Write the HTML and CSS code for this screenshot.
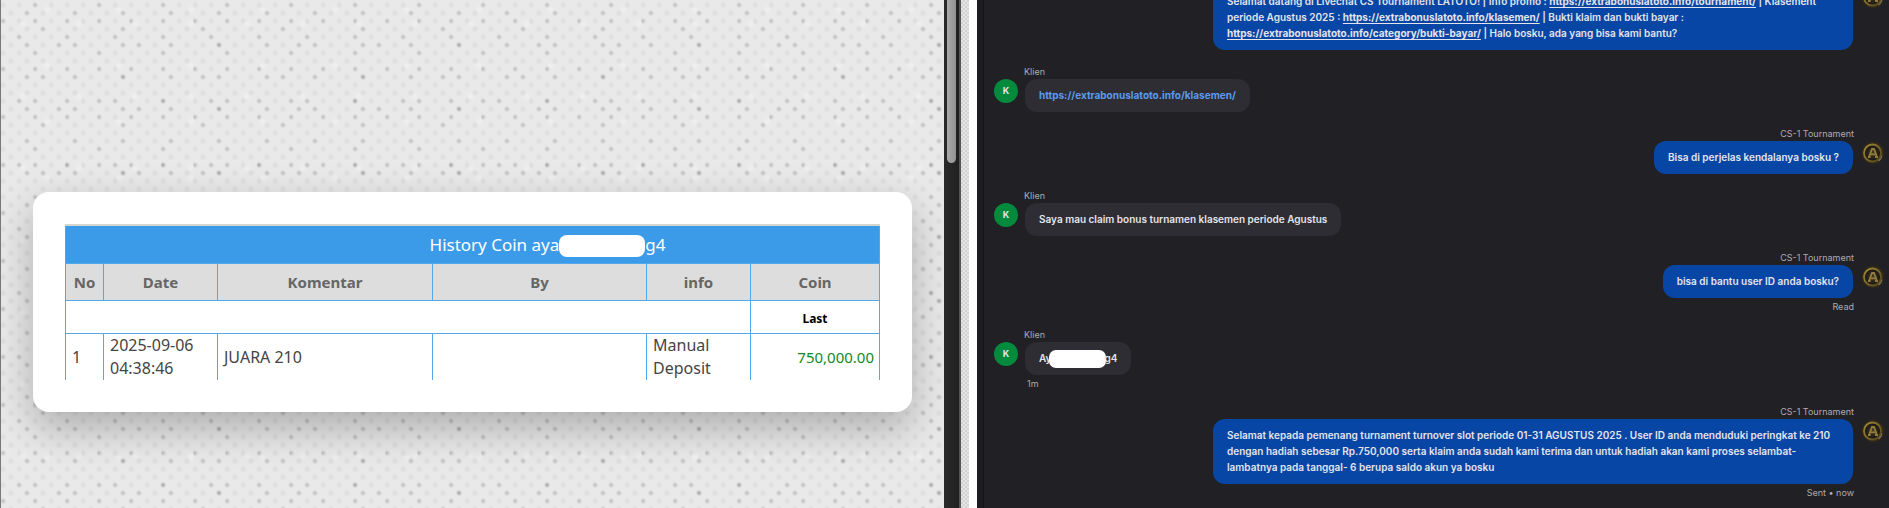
FILE: index.html
```
<!DOCTYPE html>
<html lang="id">
<head>
<meta charset="utf-8">
<title>History Coin</title>
<link rel="stylesheet" href="styles.css">
</head>
<body>
<svg class="defs" aria-hidden="true">
  <defs>
    <radialGradient id="gold-core"><stop offset="0" stop-color="#4a3d1a"/><stop offset="0.6" stop-color="#27231b"/><stop offset="1" stop-color="#15140f"/></radialGradient>
    <radialGradient id="gold-halo"><stop offset="0.7" stop-color="#3d3416"/><stop offset="1" stop-color="#211f20"/></radialGradient>
    <linearGradient id="gold-ring" x1="0" y1="0" x2="1" y2="1"><stop offset="0" stop-color="#a18a35"/><stop offset="0.5" stop-color="#7c6a2b"/><stop offset="1" stop-color="#4d3f16"/></linearGradient>
  </defs>
  <symbol id="agent-logo" viewBox="0 0 24 24">
    <circle cx="12" cy="12" r="12" fill="url(#gold-halo)"/>
    <circle cx="11.5" cy="12" r="8.5" fill="url(#gold-core)" stroke="url(#gold-ring)" stroke-width="1.8"/>
    <path d="M8 16 11 8h2l3 8M9.7 13.4h4.8M7 16h2.6M14 16h3" fill="none" stroke="#927d3e" stroke-width="1.8"/>
    <path d="M17.5 20c1.8-1.3 3-3.2 3.4-5.5" fill="none" stroke="#7d7459" stroke-width="1.2"/>
  </symbol>
</svg>
<main class="page">
  <section class="history">
    <div class="canvas">
      <div class="card">
        <table class="coins">
          <colgroup><col class="c-no"><col class="c-date"><col class="c-note"><col class="c-by"><col class="c-info"><col class="c-coin"></colgroup>
          <thead>
            <tr class="title"><th colspan="6">History Coin aya<span class="mask mask-title"></span>g4</th></tr>
            <tr class="heads"><th>No</th><th>Date</th><th>Komentar</th><th>By</th><th>info</th><th>Coin</th></tr>
          </thead>
          <tbody>
            <tr class="sub"><td colspan="5"></td><th>Last</th></tr>
            <tr class="entry"><td>1</td><td>2025-09-06 04:38:46</td><td>JUARA 210</td><td></td><td>Manual Deposit</td><td class="amount">750,000.00</td></tr>
          </tbody>
        </table>
      </div>
    </div>
    <div class="scrollbar"><div class="thumb"></div></div>
    <div class="edge"></div>
  </section>
  <section class="chat">
    <article class="msg agent">
      <div class="name">CS-1 Tournament</div>
      <div class="row"><p class="bubble">Selamat datang di Livechat CS Tournament LATOTO! | Info promo : <a href="#tournament">https://extrabonuslatoto.info/tournament/</a> | Klasement periode Agustus 2025 : <a href="#klasemen">https://extrabonuslatoto.info/klasemen/</a> | Bukti klaim dan bukti bayar : <a href="#bukti">https://extrabonuslatoto.info/category/bukti-bayar/</a> | Halo bosku, ada yang bisa kami bantu?</p><svg class="logo"><use href="#agent-logo"/></svg></div>
    </article>
    <article class="msg client">
      <div class="name">Klien</div>
      <div class="row"><span class="avatar">K</span><p class="bubble"><a href="#klasemen">https://extrabonuslatoto.info/klasemen/</a></p></div>
    </article>
    <article class="msg agent">
      <div class="name">CS-1 Tournament</div>
      <div class="row"><p class="bubble">Bisa di perjelas kendalanya bosku ?</p><svg class="logo"><use href="#agent-logo"/></svg></div>
    </article>
    <article class="msg client">
      <div class="name">Klien</div>
      <div class="row"><span class="avatar">K</span><p class="bubble">Saya mau claim bonus turnamen klasemen periode Agustus</p></div>
    </article>
    <article class="msg agent">
      <div class="name">CS-1 Tournament</div>
      <div class="row"><p class="bubble">bisa di bantu user ID anda bosku?</p><svg class="logo"><use href="#agent-logo"/></svg></div>
      <div class="status">Read</div>
    </article>
    <article class="msg client">
      <div class="name">Klien</div>
      <div class="row"><span class="avatar">K</span><p class="bubble">Ay<span class="mask mask-chat"></span>g4</p></div>
      <div class="status">1m</div>
    </article>
    <article class="msg agent">
      <div class="name">CS-1 Tournament</div>
      <div class="row"><p class="bubble">Selamat kepada pemenang turnament turnover slot periode 01-31 AGUSTUS 2025 . User ID anda menduduki peringkat ke 210 dengan hadiah sebesar Rp.750,000 serta klaim anda sudah kami terima dan untuk hadiah akan kami proses selambat-lambatnya pada tanggal- 6 berupa saldo akun ya bosku</p><svg class="logo"><use href="#agent-logo"/></svg></div>
      <div class="status">Sent • now</div>
    </article>
  </section>
</main>
</body>
</html>
```
FILE: styles.css
```
* { box-sizing: border-box; }
body { margin: 0; background: #fff; }
.defs { position: absolute; width: 0; height: 0; }

.page {
  display: grid;
  grid-template-columns: minmax(0, 969fr) minmax(0, 912fr);
  column-gap: 8px;
  height: 100vh;
  overflow: hidden;
}

/* Left pane: coin history on woven paper */
.history { display: flex; min-width: 0; }
.canvas {
  --speck: rgba(90, 90, 90, .24) 0, transparent 3px;
  --thread: rgba(90, 90, 90, .1) 0, transparent 4px;
  --glint: rgba(255, 255, 255, .3) 0, transparent 5px;
  flex: 1;
  min-width: 0;
  display: flex;
  flex-direction: column;
  justify-content: flex-end;
  padding: 0 32px 96px;
  border-left: 1px solid #777;
  overflow: hidden;
  background-color: #e9e9e9;
  background-image:
    radial-gradient(circle at 2px 5px, var(--thread)),
    radial-gradient(circle at 10px 13px, var(--thread)),
    radial-gradient(circle at 2px 21px, var(--speck)),
    radial-gradient(circle at 26px 13px, var(--speck)),
    radial-gradient(circle at 42px 29px, var(--speck)),
    radial-gradient(circle at 18px 37px, var(--speck)),
    radial-gradient(circle at 58px 45px, var(--speck)),
    radial-gradient(circle at 34px 5px, var(--speck)),
    radial-gradient(circle at 22px 24px, var(--glint)),
    radial-gradient(circle at 46px 10px, var(--glint));
  background-size:
    16px 16px, 16px 16px,
    32px 48px, 48px 32px, 80px 48px, 48px 64px, 80px 64px, 64px 48px,
    56px 72px, 72px 56px;
}
.card {
  padding: 32px;
  background: #fff;
  border-radius: 16px;
  box-shadow: 0 16px 40px rgba(0, 0, 0, .26);
}
.coins {
  width: 100%;
  table-layout: fixed;
  border-collapse: collapse;
  border-top: 2px solid #d5d6cf;
  font: 16px/23px "Noto Sans", "Open Sans", sans-serif;
  color: #444;
}
.c-no { width: 38px; }
.c-date { width: 114px; }
.c-note { width: 215px; }
.c-by { width: 214px; }
.c-info { width: 104px; }
.coins th, .coins td { padding: 0 6px; border: 1px solid #54a8e9; }
.coins .title th {
  height: 39px;
  padding: 2px 0 0 150px;
  border-top: 0;
  background: #3b9be9;
  color: #fff;
  font-size: 17px;
  font-weight: 400;
}
.heads th { height: 37px; background: #ddd; color: #666; font-size: 15px; }
.sub > * { height: 33px; }
.coins .sub th { padding-top: 2px; color: #000; font-size: 12px; }
.coins .entry td { height: 46px; border-bottom: 0; }
.coins .entry .amount { padding-right: 5px; text-align: right; color: #128a1d; font-size: 15px; }

.mask { display: inline-block; vertical-align: middle; background: #fff; }
.mask-title { width: 86px; height: 22px; border-radius: 8px; }
.mask-chat { width: 57px; height: 18px; margin: -4px -2px; border-radius: 7px; }

.scrollbar {
  width: 15px;
  padding: 0 3px;
  background: linear-gradient(90deg, #2a2a2a, #202020);
}
.thumb {
  height: 32vh;
  border-radius: 0 0 5px 5px;
  background: linear-gradient(90deg, #aaa, #929292);
}
.edge {
  width: 10px;
  border-left: 2px solid #555;
  background: repeating-conic-gradient(#d2d2d2 0 25%, #e5e5e5 0 50%) 0 0 / 4px 4px;
}

/* Right pane: live chat */
.chat {
  display: flex;
  flex-direction: column;
  justify-content: flex-end;
  gap: 16px;
  min-width: 0;
  padding: 0 4px 9px 11px;
  border-left: 6px solid #1d1c21;
  box-shadow: inset 1px 0 #151419;
  overflow: hidden;
  background: #212024;
  font: 600 10px/16px Inter, sans-serif;
  color: #e4e4ea;
}
.msg { display: flex; flex-direction: column; flex-shrink: 0; }
.agent { align-items: flex-end; }
.client { align-items: flex-start; }
.name, .status { font-size: 9px; font-weight: 400; line-height: 12px; color: #adacb2; }
.name { margin-bottom: 1px; }
.status { margin-top: 3px; }
.agent .name, .agent .status { margin-right: 31px; }
.client .name { margin-left: 30px; }
.client .status { margin-left: 33px; }
.row { display: flex; align-items: flex-start; gap: 7px; }
.bubble {
  max-width: 640px;
  margin: 0;
  padding: 8px 14px 9px;
  border-radius: 12px;
  background: #2e2d33;
}
.agent .bubble { background: #0846a5; }
.agent .row { gap: 8px; }
.bubble a { color: inherit; font-weight: 700; text-underline-offset: 2px; }
.client .bubble a { color: #5b9bee; text-decoration: none; }
.avatar {
  width: 24px;
  height: 24px;
  border-radius: 50%;
  background: #048a3d;
  font-size: 9px;
  font-weight: 700;
  line-height: 24px;
  text-align: center;
}
.logo { width: 24px; height: 24px; flex: none; }
```
